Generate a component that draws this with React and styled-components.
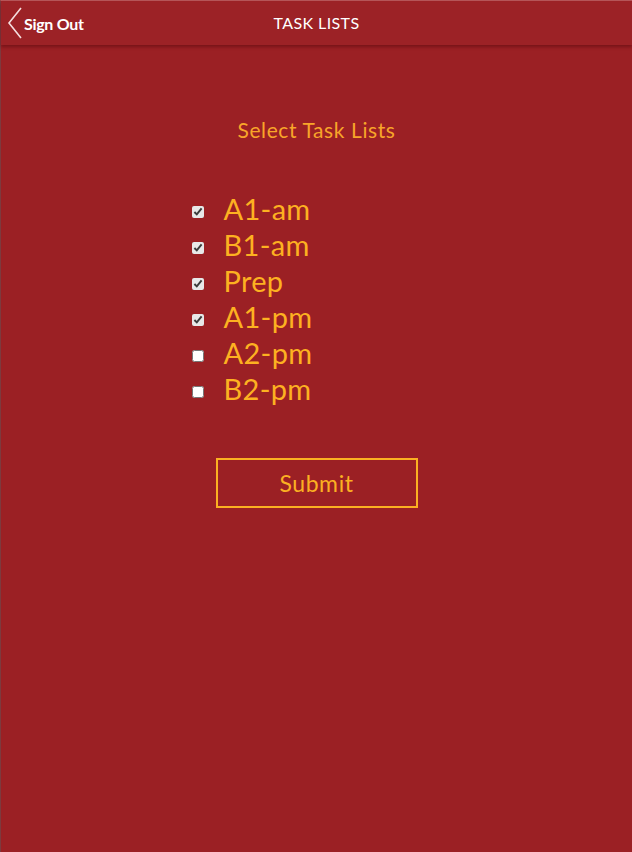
import React, { useState } from "react";
import styled, { createGlobalStyle } from "styled-components";

const GlobalStyle = createGlobalStyle`
  html, body {
    margin: 0;
    padding: 0;
    background: #9b2024;
  }
  body {
    font-family: Lato, "Open Sans", sans-serif;
  }
`;

const Page = styled.div`
  min-height: 852px;
  background: #9b2024;
  border-left: 1px solid #7d3a3e;
  border-top: 1px solid #b9585b;
  box-sizing: border-box;
`;

const Header = styled.header`
  position: relative;
  height: 44px;
  display: flex;
  align-items: center;
  justify-content: center;
  padding-bottom: 2px;
  box-sizing: border-box;
  background: #9c2226;
  box-shadow: 0 2px 3px rgba(90, 10, 14, 0.55);
`;

const BackButton = styled.button`
  position: absolute;
  left: 6px;
  top: 6px;
  display: flex;
  align-items: center;
  gap: 1px;
  background: none;
  border: 0;
  padding: 0 0 2px;
  color: #ffffff;
  font-family: Lato, sans-serif;
  font-weight: 700;
  font-size: 16px;
  letter-spacing: -0.3px;
  cursor: pointer;
`;

const Title = styled.h1`
  margin: 0;
  color: #ffffff;
  font-size: 16px;
  font-weight: 400;
  letter-spacing: 0.4px;
`;

const Content = styled.main`
  display: flex;
  flex-direction: column;
  align-items: center;
  padding-top: 72px;
`;

const Heading = styled.h2`
  margin: 0;
  color: #f8a52a;
  font-size: 21px;
  font-weight: 400;
  letter-spacing: 0.6px;
`;

const List = styled.ul`
  list-style: none;
  margin: 48px 0 0;
  padding: 0;
  width: 250px;
`;

const Item = styled.li`
  display: flex;
  align-items: center;
  height: 36px;
`;

const Check = styled.input`
  width: 12px;
  height: 12px;
  margin: 8px 20px 0 0;
  accent-color: #e8e8e8;
`;

const Label = styled.label`
  color: #fdb121;
  font-size: 29px;
  letter-spacing: 0.3px;
  cursor: pointer;
`;

const SubmitButton = styled.button`
  margin-top: 52px;
  width: 202px;
  height: 50px;
  background: transparent;
  border: 2px solid #fbb022;
  color: #fbb022;
  font-family: Lato, sans-serif;
  font-size: 23px;
  letter-spacing: 0.6px;
  cursor: pointer;
`;

const lists = [
  { id: "a1am", label: "A1-am", checked: true },
  { id: "b1am", label: "B1-am", checked: true },
  { id: "prep", label: "Prep", checked: true },
  { id: "a1pm", label: "A1-pm", checked: true },
  { id: "a2pm", label: "A2-pm", checked: false },
  { id: "b2pm", label: "B2-pm", checked: false },
];

function Chevron() {
  return (
    <svg width="16" height="32" viewBox="0 0 16 32" fill="none">
      <path d="M14 1 L2 16 L14 31" stroke="#f4dede" strokeWidth="1.6" />
    </svg>
  );
}

export default function App() {
  const [checked, setChecked] = useState(
    Object.fromEntries(lists.map(({ id, checked }) => [id, checked]))
  );

  const toggle = (id) => setChecked((prev) => ({ ...prev, [id]: !prev[id] }));

  return (
    <>
      <GlobalStyle />
      <Page>
        <Header>
          <BackButton>
            <Chevron />
            Sign Out
          </BackButton>
          <Title>TASK LISTS</Title>
        </Header>
        <Content>
          <Heading>Select Task Lists</Heading>
          <List>
            {lists.map(({ id, label }) => (
              <Item key={id}>
                <Check
                  type="checkbox"
                  id={id}
                  checked={checked[id]}
                  onChange={() => toggle(id)}
                />
                <Label htmlFor={id}>{label}</Label>
              </Item>
            ))}
          </List>
          <SubmitButton>Submit</SubmitButton>
        </Content>
      </Page>
    </>
  );
}
